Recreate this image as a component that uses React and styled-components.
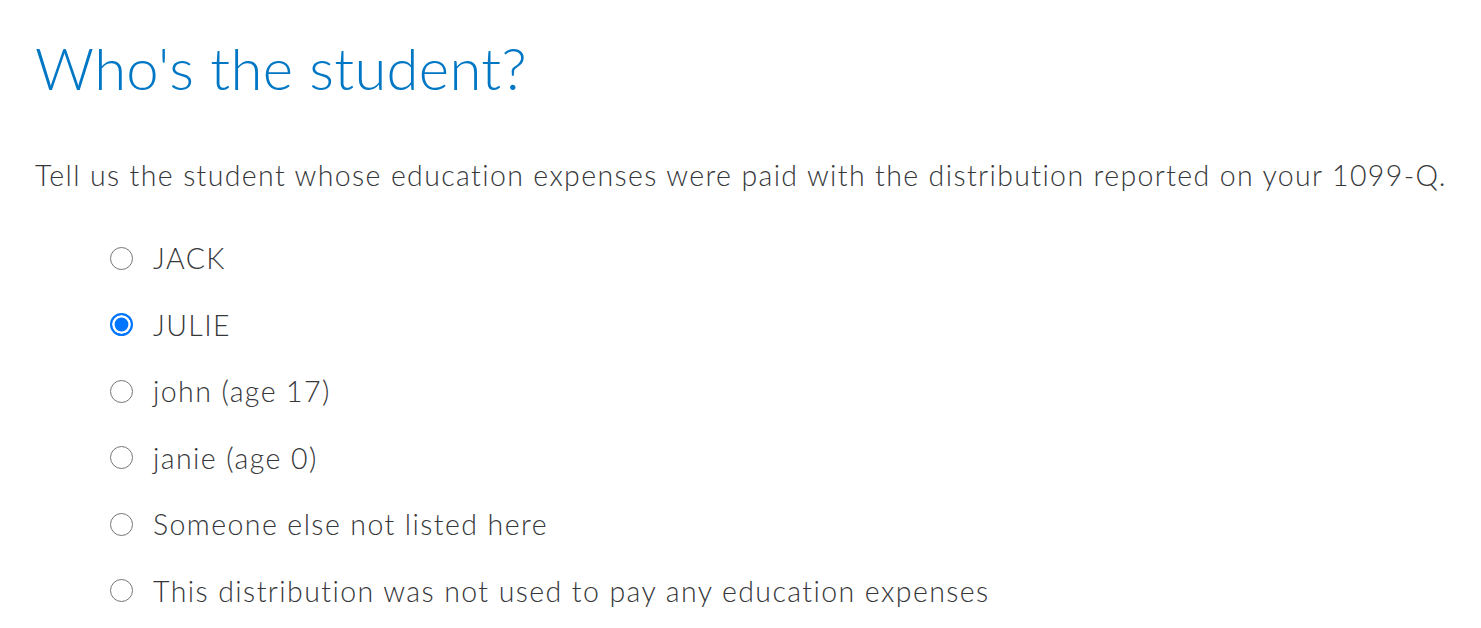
import React, { useState } from "react";
import styled, { createGlobalStyle } from "styled-components";

const GlobalStyle = createGlobalStyle`
  html, body {
    margin: 0;
    padding: 0;
    background: #ffffff;
  }
  body {
    font-family: "Lato", "Noto Sans", sans-serif;
    color: #393a3d;
  }
`;

const Page = styled.main`
  padding: 28px 35px 0 35px;
`;

const Title = styled.h1`
  margin: 0;
  font-size: 58px;
  font-weight: 300;
  letter-spacing: 0.3px;
  line-height: 80px;
  color: #0077c5;
`;

const Intro = styled.p`
  margin: 48px 0 0 0;
  font-size: 28.5px;
  font-weight: 300;
  letter-spacing: 1.37px;
  line-height: 38px;
  color: #36373a;
  white-space: nowrap;
`;

const Options = styled.div`
  display: flex;
  flex-direction: column;
  gap: 22px;
  margin-top: 42px;
  padding-left: 74px;
`;

const Option = styled.label`
  display: flex;
  align-items: center;
  gap: 20px;
  height: 44.5px;
  font-size: 28.5px;
  font-weight: 300;
  letter-spacing: 1.42px;
  color: #36373a;
  cursor: pointer;
`;

const Radio = styled.input.attrs({ type: "radio" })`
  appearance: none;
  flex: none;
  box-sizing: border-box;
  width: 23px;
  height: 23px;
  margin: 0 0 0 1px;
  border-radius: 50%;
  border: 1.6px solid #767676;
  background: #ffffff;
  cursor: pointer;

  &:checked {
    border: 2.2px solid #0075ff;
    background: #0075ff;
    box-shadow: inset 0 0 0 2.6px #ffffff;
  }
`;

const students = [
  "JACK",
  "JULIE",
  "john (age 17)",
  "janie (age 0)",
  "Someone else not listed here",
  "This distribution was not used to pay any education expenses",
];

export default function App() {
  const [selected, setSelected] = useState("JULIE");

  return (
    <>
      <GlobalStyle />
      <Page>
        <Title>Who's the student?</Title>
        <Intro>
          Tell us the student whose education expenses were paid with the
          distribution reported on your 1099-Q.
        </Intro>
        <Options>
          {students.map((name) => (
            <Option key={name}>
              <Radio
                name="student"
                checked={selected === name}
                onChange={() => setSelected(name)}
              />
              {name}
            </Option>
          ))}
        </Options>
      </Page>
    </>
  );
}
